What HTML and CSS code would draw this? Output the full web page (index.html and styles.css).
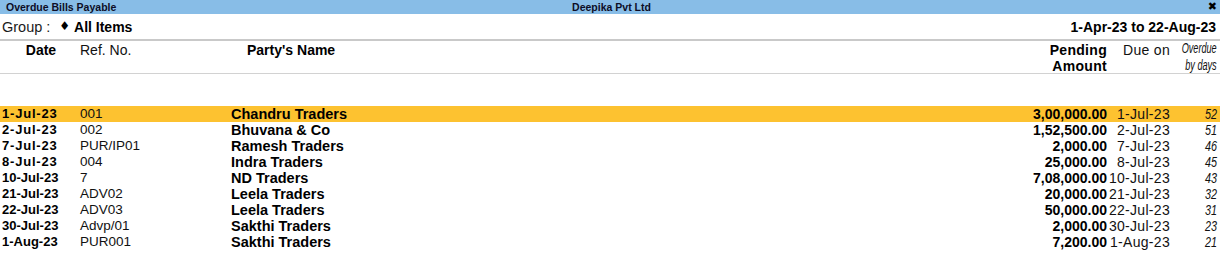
FILE: index.html
```html
<!DOCTYPE html>
<html lang="en">
<head>
<meta charset="utf-8">
<title>Overdue Bills Payable</title>
<link rel="stylesheet" href="styles.css">
</head>
<body>
<div class="titlebar">
  <span class="t-left">Overdue Bills Payable</span>
  <span class="t-center">Deepika Pvt Ltd</span>
  <span class="t-right">&#x2716;</span>
</div>
<div class="groupbar">
  <span class="group"><span class="g-label">Group :</span> <span class="diamond">&#x2666;</span><b>All Items</b></span>
  <span class="period">1-Apr-23 to 22-Aug-23</span>
</div>
<div class="rule rule-thick"></div>
<div class="grid head">
  <div class="h-date">Date</div>
  <div class="h-ref">Ref. No.</div>
  <div class="h-party">Party's Name</div>
  <div class="h-amt">Pending<br>Amount</div>
  <div class="h-due">Due on</div>
  <div class="h-od">Overdue<br>by days</div>
</div>
<div class="rule rule-thin"></div>
<div class="body">
  <div class="grid row sel"><div class="c-date sp">1-Jul-23</div><div class="c-ref">001</div><div class="c-party">Chandru Traders</div><div class="c-amt">3,00,000.00</div><div class="c-due">1-Jul-23</div><div class="c-od">52</div></div>
  <div class="grid row"><div class="c-date sp">2-Jul-23</div><div class="c-ref">002</div><div class="c-party">Bhuvana &amp; Co</div><div class="c-amt">1,52,500.00</div><div class="c-due">2-Jul-23</div><div class="c-od">51</div></div>
  <div class="grid row"><div class="c-date sp">7-Jul-23</div><div class="c-ref">PUR/IP01</div><div class="c-party">Ramesh Traders</div><div class="c-amt">2,000.00</div><div class="c-due">7-Jul-23</div><div class="c-od">46</div></div>
  <div class="grid row"><div class="c-date sp">8-Jul-23</div><div class="c-ref">004</div><div class="c-party">Indra Traders</div><div class="c-amt">25,000.00</div><div class="c-due">8-Jul-23</div><div class="c-od">45</div></div>
  <div class="grid row"><div class="c-date">10-Jul-23</div><div class="c-ref">7</div><div class="c-party">ND Traders</div><div class="c-amt">7,08,000.00</div><div class="c-due">10-Jul-23</div><div class="c-od">43</div></div>
  <div class="grid row"><div class="c-date">21-Jul-23</div><div class="c-ref">ADV02</div><div class="c-party">Leela Traders</div><div class="c-amt">20,000.00</div><div class="c-due">21-Jul-23</div><div class="c-od">32</div></div>
  <div class="grid row"><div class="c-date">22-Jul-23</div><div class="c-ref">ADV03</div><div class="c-party">Leela Traders</div><div class="c-amt">50,000.00</div><div class="c-due">22-Jul-23</div><div class="c-od">31</div></div>
  <div class="grid row"><div class="c-date">30-Jul-23</div><div class="c-ref">Advp/01</div><div class="c-party">Sakthi Traders</div><div class="c-amt">2,000.00</div><div class="c-due">30-Jul-23</div><div class="c-od">23</div></div>
  <div class="grid row"><div class="c-date">1-Aug-23</div><div class="c-ref">PUR001</div><div class="c-party">Sakthi Traders</div><div class="c-amt">7,200.00</div><div class="c-due">1-Aug-23</div><div class="c-od">21</div></div>
</div>
</body>
</html>
```
FILE: styles.css
```css
* { box-sizing: border-box; }
html, body { margin: 0; padding: 0; background: #fff; }
body {
  font-family: "Liberation Sans", Arial, sans-serif;
  color: #000;
  width: 1220px;
  height: 271px;
  overflow: hidden;
}
.titlebar {
  height: 14px;
  background: #88bde7;
  display: grid;
  grid-template-columns: 1fr auto 1fr;
  align-items: center;
  font-size: 10.5px;
  font-weight: bold;
  line-height: 14px;
  color: #0d0d26;
  padding: 0 3px 0 6px;
}
.t-center { text-align: center; }
.t-right {
  text-align: right;
  font-family: "DejaVu Sans", sans-serif;
  font-size: 11px;
  color: #000;
}
.groupbar {
  height: 25px;
  display: flex;
  justify-content: space-between;
  align-items: center;
  padding: 0 4px 0 2px;
  font-size: 14px;
}
.g-label { color: #1a1a1a; font-size: 14.5px; }
.diamond {
  font-family: "DejaVu Sans", sans-serif;
  font-size: 12px;
  margin: 0 4px 0 5px;
  position: relative;
  top: -2px;
}
.period { font-weight: bold; }
.rule-thick { height: 2px; background: #c9c9c9; }
.rule-thin { height: 1px; background: #d2d2d2; }
.grid {
  display: grid;
  grid-template-columns: 80px 151px 1fr 120px 63px 50px;
  align-items: start;
}
.head {
  height: 32px;
  padding-top: 1px;
  font-size: 14px;
  line-height: 16px;
}
.h-date { text-align: center; font-weight: bold; padding-left: 2px; }
.h-ref { color: #111; }
.h-party { font-weight: bold; padding-left: 16px; }
.h-amt { font-weight: bold; text-align: right; letter-spacing: 0.3px; }
.h-due { text-align: right; letter-spacing: 0.3px; color: #111; }
.h-od {
  font-style: italic;
  text-align: right;
  white-space: nowrap;
  padding-right: 4px;
  margin-top: 2px;
  font-size: 11px;
  line-height: 12.8px;
  color: #111;
  transform: scale(0.83, 1.25);
  transform-origin: right center;
}
.body { padding-top: 32px; }
.row {
  height: 16px;
  line-height: 16px;
  white-space: nowrap;
}
.row.sel { background: #fdc230; }
.c-date { font-size: 13px; font-weight: bold; padding-left: 2px; }
.c-date.sp { letter-spacing: 0.8px; }
.c-ref { font-size: 13.5px; color: #111; }
.c-party { font-size: 14.5px; font-weight: bold; }
.c-amt { font-size: 14px; font-weight: bold; text-align: right; }
.c-due { font-size: 14px; text-align: right; letter-spacing: 0.3px; color: #111; }
.c-od {
  font-style: italic;
  text-align: right;
  padding-right: 4px;
  font-size: 15px;
  color: #111;
  transform: scaleX(0.72);
  transform-origin: right center;
}
```
